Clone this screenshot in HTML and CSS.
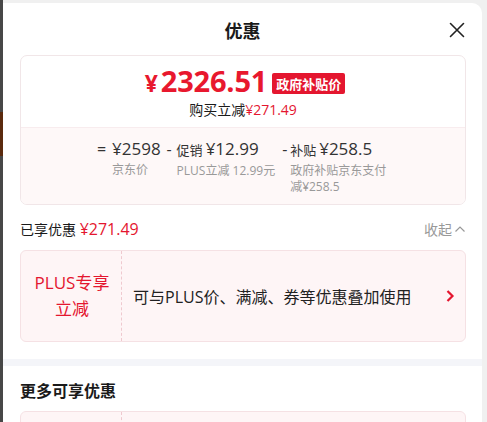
FILE: index.html
```html
<!DOCTYPE html>
<html lang="zh">
<head>
<meta charset="utf-8">
<link rel="stylesheet" href="styles.css">
</head>
<body>
<div class="page">
  <div class="side">
    <div class="side-brown"></div>
  </div>
  <div class="modal">
    <div class="header">
      <div class="title">优惠</div>
      <svg class="close" width="16" height="16" viewBox="0 0 16 16"><path d="M1.5 1.5L14.5 14.5M14.5 1.5L1.5 14.5" stroke="#222" stroke-width="1.6" stroke-linecap="round"/></svg>
    </div>
    <div class="content">
      <div class="price-card">
        <div class="price-top">
          <div class="price-line">
            <span class="price"><span class="yen">¥</span>2326.51</span>
            <span class="badge">政府补贴价</span>
          </div>
          <div class="sub-line">购买立减<span class="red">¥271.49</span></div>
        </div>
        <div class="price-bottom">
          <div class="calc">
            <div class="op op-eq">=</div>
            <div class="col c1">
              <div class="amt">¥2598</div>
              <div class="lbl">京东价</div>
            </div>
            <div class="op op-m1">-</div>
            <div class="col c2">
              <div class="amt"><span class="tag">促销</span>¥12.99</div>
              <div class="lbl">PLUS立减 12.99元</div>
            </div>
            <div class="op op-m2">-</div>
            <div class="col c3">
              <div class="amt"><span class="tag">补贴</span>¥258.5</div>
              <div class="lbl">政府补贴京东支付<br>减¥258.5</div>
            </div>
          </div>
        </div>
      </div>

      <div class="enjoy">
        <div class="enjoy-l">已享优惠 <span class="red2">¥271.49</span></div>
        <div class="enjoy-r">收起<svg width="12" height="8" viewBox="0 0 12 8"><path d="M1.5 6.5L6 2L10.5 6.5" fill="none" stroke="#999" stroke-width="1.2"/></svg></div>
      </div>

      <div class="promo">
        <div class="promo-l">PLUS专享<br>立减</div>
        <div class="promo-r">
          <span class="promo-text">可与PLUS价、满减、券等优惠叠加使用</span>
          <svg width="10" height="14" viewBox="0 0 10 14"><path d="M2.5 2L7.5 7L2.5 12" fill="none" stroke="#e4162f" stroke-width="2.2"/></svg>
        </div>
      </div>
    </div>
    <div class="band"></div>
    <div class="content">
      <div class="more-title">更多可享优惠</div>
      <div class="promo promo-next">
        <div class="promo-l"></div>
        <div class="promo-r"></div>
      </div>
    </div>
  </div>
</div>
</body>
</html>
```

FILE: styles.css
```css
* { box-sizing: border-box; margin: 0; padding: 0; }
html, body { width: 487px; height: 422px; overflow: hidden; }
body {
  background: #f0f0f0;
  font-family: "Open Sans", "Noto Sans CJK SC", sans-serif;
  color: #1a1a1a;
}
.page { display: flex; height: 422px; }
.side {
  width: 3px;
  background: #474747;
  padding-top: 112px;
  flex: none;
}
.side-brown { height: 44px; background: #5b2a0e; }
.modal {
  margin-top: 3px;
  width: 479px;
  height: 419px;
  overflow: hidden;
  background: #fff;
  border-top-right-radius: 10px;
  flex: none;
}
.header {
  height: 44px;
  display: flex;
  align-items: center;
  justify-content: center;
  position: relative;
}
.title { font-size: 18px; font-weight: 700; color: #1a1a1a; padding-top: 10px; font-family: "Noto Sans CJK SC", sans-serif; }
.close { position: absolute; right: 17px; top: 19px; }
.content { padding: 0 16px 0 17px; }
.price-card {
  margin-top: 8px;
  border: 1px solid #f1e6e8;
  border-radius: 7px;
  overflow: hidden;
}
.price-top {
  height: 71px;
  display: flex;
  flex-direction: column;
  align-items: center;
  padding-top: 8px;
}
.price-line { display: flex; align-items: center; gap: 5px; height: 36px; padding-left: 4px; }
.price { color: #e8182e; font-size: 29px; font-weight: 700; line-height: 36px; letter-spacing: -0.2px; }
.yen { font-size: 23px; margin-right: 3px; }
.badge {
  background: #e4162f;
  color: #fff;
  font-size: 13px;
  font-weight: 700;
  padding: 0 4px;
  height: 21px;
  line-height: 21px;
  border-radius: 2px;
  margin-top: 2px;
  font-family: "Noto Sans CJK SC", sans-serif;
}
.sub-line { font-size: 14px; line-height: 20px; color: #1a1a1a; margin-top: 0; }
.red { color: #e4162f; }
.price-bottom {
  height: 77px;
  background: #fef8f8;
  border-top: 1px solid #f8ecee;
  padding-top: 9px;
}
.calc { display: flex; padding-left: 76px; }
.op { font-size: 16px; color: #333; line-height: 24px; }
.op-eq { width: 15px; }
.op-m1 { width: 10px; }
.op-m2 { width: 8px; }
.c1 { margin-right: 6px; }
.c2 { margin-right: 7px; }
.amt { font-size: 17px; color: #333; line-height: 24px; white-space: nowrap; }
.tag { font-size: 13px; margin-right: 3px; }
.lbl { font-size: 12px; color: #999; line-height: 16px; margin-top: 1px; white-space: nowrap; }
.enjoy {
  display: flex;
  justify-content: space-between;
  align-items: center;
  height: 44px;
  padding-top: 4px;
}
.enjoy-l { font-size: 14px; color: #1a1a1a; }
.red2 { color: #e4162f; font-size: 16px; }
.enjoy-r { font-size: 14px; color: #999; display: flex; align-items: center; gap: 2px; }
.promo {
  height: 92px;
  background: #fef5f6;
  border: 1px solid #f5e1e4;
  border-radius: 6px;
  display: flex;
  margin-top: 1px;
}
.promo-l {
  width: 101px;
  flex: none;
  border-right: 1px dashed #efc9cf;
  color: #e4162f;
  font-size: 17px;
  line-height: 26px;
  text-align: center;
  display: flex;
  align-items: center;
  justify-content: center;
  padding-left: 2px;
}
.promo-r {
  flex: 1;
  display: flex;
  align-items: center;
  justify-content: space-between;
  padding: 0 10px 0 11px;
}
.promo-text { font-size: 16px; color: #222; }
.band { height: 7px; background: #f4f5f9; margin-top: 17px; }
.more-title { font-size: 16px; font-weight: 700; color: #1a1a1a; line-height: 22px; margin-top: 13px; font-family: "Noto Sans CJK SC", sans-serif; }
.promo-next { margin-top: 10px; }
```
